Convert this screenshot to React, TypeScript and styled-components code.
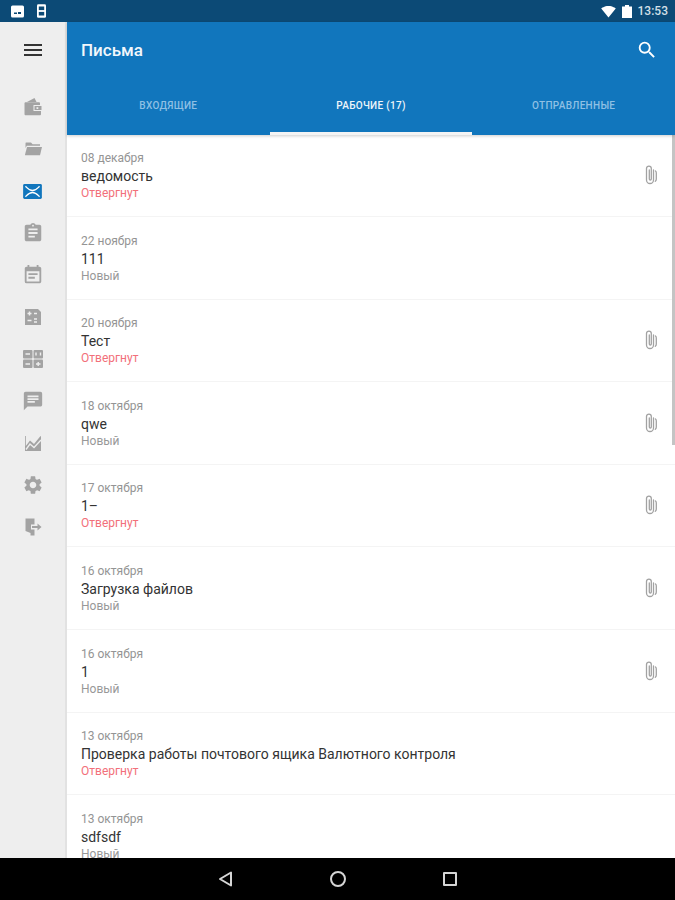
import React from "react";
import styled, { createGlobalStyle } from "styled-components";
import {
  MdAssignment,
  MdChat,
  MdEventNote,
  MdMenu,
  MdSearch,
  MdSettings,
  MdSignalWifi4Bar,
} from "react-icons/md";

const GlobalStyle = createGlobalStyle`
  html, body {
    margin: 0;
    padding: 0;
    background: #fff;
    font-family: Roboto, "Liberation Sans", sans-serif;
  }
`;

const Screen = styled.div`
  width: 675px;
  height: 900px;
  display: flex;
  flex-direction: column;
  overflow: hidden;
`;

const StatusBar = styled.div`
  height: 22px;
  flex: none;
  background: #0c4a76;
  color: #fff;
  display: flex;
  align-items: center;
  padding: 0 7px 0 11px;
`;

const StatusLeft = styled.div`
  display: flex;
  align-items: center;
  gap: 13px;
  flex: 1;
`;

const StatusRight = styled.div`
  display: flex;
  align-items: center;
  gap: 6px;
`;

const Clock = styled.span`
  font-size: 12px;
  font-weight: 500;
  color: #d5e0e8;
`;

const Body = styled.div`
  flex: 1;
  min-height: 0;
  display: flex;
`;

const Sidebar = styled.nav`
  width: 65px;
  flex: none;
  background: #eeeeee;
  border-right: 2px solid #e2e2e2;
  display: flex;
  flex-direction: column;
  align-items: center;
`;

const MenuButton = styled.div`
  height: 56px;
  margin-bottom: 8px;
  display: flex;
  align-items: center;
  color: #333;
`;

const NavItem = styled.div<{ $active?: boolean }>`
  height: 42px;
  display: flex;
  align-items: center;
  color: ${(p) => (p.$active ? "#1176bd" : "#a3a3a3")};
`;

const Content = styled.main`
  flex: 1;
  min-width: 0;
  display: flex;
  flex-direction: column;
  position: relative;
`;

const Header = styled.header`
  background: #1176bd;
  flex: none;
  box-shadow: 0 1px 3px rgba(0, 0, 0, 0.2);
  z-index: 1;
`;

const TitleRow = styled.div`
  height: 56px;
  display: flex;
  align-items: center;
  justify-content: space-between;
  padding: 0 17px 0 14px;
  color: #fff;
`;

const Title = styled.h1`
  margin: 0;
  font-size: 17px;
  font-weight: 500;
  color: #f2f7fb;
`;

const Tabs = styled.div`
  height: 56.5px;
  display: flex;
`;

const Tab = styled.div<{ $active?: boolean }>`
  flex: 1;
  display: flex;
  align-items: center;
  justify-content: center;
  padding-top: 2px;
  font-size: 10px;
  font-weight: 500;
  letter-spacing: 0.3px;
  color: ${(p) => (p.$active ? "#eef5fa" : "#8fc0e4")};
  border-bottom: 3px solid ${(p) => (p.$active ? "#f4f4f4" : "transparent")};
  box-sizing: border-box;
`;

const List = styled.div`
  flex: 1;
  min-height: 0;
  overflow: hidden;
  background: #fff;
`;

const ScrollThumb = styled.div`
  position: absolute;
  right: 0;
  top: 113px;
  width: 3px;
  height: 310px;
  background: #c4c4c4;
`;

const Row = styled.div`
  height: 82.6px;
  box-sizing: border-box;
  padding: 14.5px 14px 0 14px;
  border-bottom: 1px solid #f4f4f4;
  display: flex;
  align-items: flex-start;
  justify-content: space-between;
`;

const RowText = styled.div`
  display: flex;
  flex-direction: column;
`;

const DateLine = styled.span`
  font-size: 12px;
  line-height: 18px;
  color: #949494;
`;

const Subject = styled.span`
  font-size: 14px;
  line-height: 18px;
  color: #333;
`;

const State = styled.span<{ $rejected?: boolean }>`
  font-size: 12px;
  line-height: 17px;
  color: ${(p) => (p.$rejected ? "#f2707a" : "#989898")};
`;

const Clip = styled.svg`
  width: 14px;
  height: 20px;
  margin: 16px 4px 0 0;
  fill: none;
  stroke: #a2a2a2;
  stroke-width: 1.3;
  stroke-linecap: round;
`;

const NavBar = styled.div`
  height: 42px;
  flex: none;
  background: #000;
  display: flex;
  align-items: center;
  justify-content: center;
  gap: 94px;
`;

const NavGlyph = styled.svg`
  width: 18px;
  height: 18px;
  fill: none;
  stroke: #d6d6d6;
  stroke-width: 2;
  stroke-linejoin: round;
`;

const PaperClip = () => (
  <Clip viewBox="0 0 14 20">
    <path d="M10.500 5v10a3.500 3.500 0 0 1-7 0V3.500a2.400 2.400 0 0 1 4.800 0V14a1 1 0 0 1-2 0V5" />
    <path d="M12.500 6c.6.500.8 1 .8 2v6c0 1-.3 1.800-1 2.300" />
  </Clip>
);

const WalletIcon = () => (
  <svg width="20" height="20" viewBox="0 0 20 20">
    <path d="M4 5 11.500 1l2 4z" fill="currentColor" />
    <path d="M1.500 6.500c0-.8.500-1.300 1.300-1.300h13c.8 0 1.200.5 1.200 1.300V8h-6.500v6H18v3c0 .8-.4 1.300-1.200 1.300h-14c-.8 0-1.300-.5-1.300-1.300z" fill="currentColor" />
    <rect x="11.500" y="9" width="7" height="4" fill="currentColor" />
    <rect x="13.500" y="10.200" width="1.800" height="1.800" fill="#eee" />
  </svg>
);

const Folder = () => (
  <svg width="20" height="20" viewBox="0 0 20 20" fill="currentColor">
    <path d="M3 3.500h5l1.600 1.800H17v1.400H3.800L2.500 9V5c0-.8.200-1.500.500-1.500z" />
    <path d="M4 8h15l-2 8.200H2.200c-.2 0-.2-.2-.2-.4z" />
  </svg>
);

const MailIcon = () => (
  <svg width="19" height="15" viewBox="0 0 20 16">
    <rect width="20" height="16" rx="1.500" fill="#1176bd" />
    <path
      d="M2.500 2.500C5 5 6.500 7 10 7s5-2 7.500-4.500M2.500 13.500C5 11 6.500 9 10 9s5 2 7.500 4.500"
      fill="none"
      stroke="#fff"
      strokeWidth="1.500"
    />
  </svg>
);

const CalcIcon = () => (
  <svg width="20" height="20" viewBox="0 0 20 20">
    <path d="M2 2h13l3 3v13H2z" fill="currentColor" />
    <path
      d="M4.500 6.500h4M6.500 4.500v4M11 6.500h3M4.500 13.500h4M11 12h3M11 15h3"
      stroke="#eee"
      strokeWidth="1.500"
    />
  </svg>
);

const GridIcon = () => (
  <svg width="22" height="20" viewBox="0 0 22 20">
    <rect x="1" y="1" width="9.500" height="8.500" rx="1" fill="currentColor" />
    <rect x="11.500" y="1" width="9.500" height="8.500" rx="1" fill="currentColor" />
    <rect x="1" y="10.500" width="9.500" height="8.500" rx="1" fill="currentColor" />
    <rect x="11.500" y="10.500" width="9.500" height="8.500" rx="1" fill="currentColor" />
    <path
      d="M3.500 5h4.500M14 3.500v3M18.500 3.500v3M3.500 15h4.500M14 15h4.500M16.200 13v4"
      stroke="#eee"
      strokeWidth="1.400"
    />
  </svg>
);

const ChartIcon = () => (
  <svg width="20" height="20" viewBox="0 0 20 20">
    <path d="M2 18V3h.800v10L7 7.500l4 3.500 6.500-8 .500.500V18z" fill="currentColor" />
    <path d="M3 16.500 7 11l4 3.500L18 7" fill="none" stroke="#eee" strokeWidth="1.300" />
  </svg>
);

const ExitIcon = () => (
  <svg width="20" height="20" viewBox="0 0 20 20">
    <path d="M2.500 1.500h9v6H8v5h3.500v6H7.500V16l-5-2z" fill="currentColor" />
    <path d="M9 10h7" stroke="currentColor" strokeWidth="2" />
    <path d="M14.500 6.500 18.500 10l-4 3.500z" fill="currentColor" />
  </svg>
);

const letters = [
  { date: "08 декабря", subject: "ведомость", state: "Отвергнут", clip: true },
  { date: "22 ноября", subject: "111", state: "Новый", clip: false },
  { date: "20 ноября", subject: "Тест", state: "Отвергнут", clip: true },
  { date: "18 октября", subject: "qwe", state: "Новый", clip: true },
  { date: "17 октября", subject: "1–", state: "Отвергнут", clip: true },
  { date: "16 октября", subject: "Загрузка файлов", state: "Новый", clip: true },
  { date: "16 октября", subject: "1", state: "Новый", clip: true },
  {
    date: "13 октября",
    subject: "Проверка работы почтового ящика Валютного контроля",
    state: "Отвергнут",
    clip: false,
  },
  { date: "13 октября", subject: "sdfsdf", state: "Новый", clip: false },
];

export default function App() {
  return (
    <Screen>
      <GlobalStyle />
      <StatusBar>
        <StatusLeft>
          <svg width="13" height="13" viewBox="0 0 13 13">
            <rect width="13" height="12" y="0.500" rx="1.500" fill="#fff" />
            <path d="M3 9h3V7.500H3zM7 9h3V7H7z" fill="#0c4a76" />
          </svg>
          <svg width="9" height="14" viewBox="0 0 10 15">
            <rect width="10" height="15" rx="1.500" fill="#fff" />
            <rect x="2" y="2.500" width="6" height="4" fill="#0c4a76" />
            <rect x="2" y="8.500" width="6" height="4" fill="#0c4a76" />
          </svg>
        </StatusLeft>
        <StatusRight>
          <MdSignalWifi4Bar size={15} />
          <svg width="10" height="13" viewBox="0 0 10 13">
            <path d="M3 0h4v1.500h3V13H0V1.500h3z" fill="#fff" />
          </svg>
          <Clock>13:53</Clock>
        </StatusRight>
      </StatusBar>
      <Body>
        <Sidebar>
          <MenuButton>
            <MdMenu size={24} />
          </MenuButton>
          <NavItem>
            <WalletIcon />
          </NavItem>
          <NavItem>
            <Folder />
          </NavItem>
          <NavItem $active>
            <MailIcon />
          </NavItem>
          <NavItem>
            <MdAssignment size={22} />
          </NavItem>
          <NavItem>
            <MdEventNote size={22} />
          </NavItem>
          <NavItem>
            <CalcIcon />
          </NavItem>
          <NavItem>
            <GridIcon />
          </NavItem>
          <NavItem>
            <MdChat size={22} />
          </NavItem>
          <NavItem>
            <ChartIcon />
          </NavItem>
          <NavItem>
            <MdSettings size={22} />
          </NavItem>
          <NavItem>
            <ExitIcon />
          </NavItem>
        </Sidebar>
        <Content>
          <Header>
            <TitleRow>
              <Title>Письма</Title>
              <MdSearch size={22} />
            </TitleRow>
            <Tabs>
              <Tab>ВХОДЯЩИЕ</Tab>
              <Tab $active>РАБОЧИЕ (17)</Tab>
              <Tab>ОТПРАВЛЕННЫЕ</Tab>
            </Tabs>
          </Header>
          <List>
            {letters.map((l, i) => (
              <Row key={i}>
                <RowText>
                  <DateLine>{l.date}</DateLine>
                  <Subject>{l.subject}</Subject>
                  <State $rejected={l.state === "Отвергнут"}>{l.state}</State>
                </RowText>
                {l.clip && <PaperClip />}
              </Row>
            ))}
          </List>
          <ScrollThumb />
        </Content>
      </Body>
      <NavBar>
        <NavGlyph viewBox="0 0 18 18">
          <path d="M14 2.500v13L3 9z" />
        </NavGlyph>
        <NavGlyph viewBox="0 0 18 18">
          <circle cx="9" cy="9" r="7" />
        </NavGlyph>
        <NavGlyph viewBox="0 0 18 18">
          <rect x="3" y="3" width="12" height="12" />
        </NavGlyph>
      </NavBar>
    </Screen>
  );
}
